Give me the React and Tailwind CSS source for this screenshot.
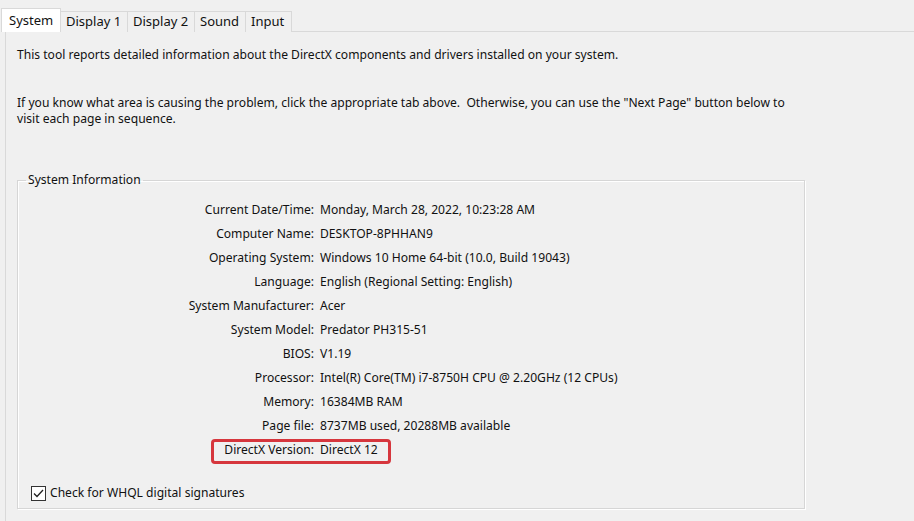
import React from "react";

const rows = [
  ["Current Date/Time:", "Monday, March 28, 2022, 10:23:28 AM"],
  ["Computer Name:", "DESKTOP-8PHHAN9"],
  ["Operating System:", "Windows 10 Home 64-bit (10.0, Build 19043)"],
  ["Language:", "English (Regional Setting: English)"],
  ["System Manufacturer:", "Acer"],
  ["System Model:", "Predator PH315-51"],
  ["BIOS:", "V1.19"],
  ["Processor:", "Intel(R) Core(TM) i7-8750H CPU @ 2.20GHz (12 CPUs)"],
  ["Memory:", "16384MB RAM"],
  ["Page file:", "8737MB used, 20288MB available"],
  ["DirectX Version:", "DirectX 12"],
];

const tabs = [
  { label: "System", w: "w-[60px]" },
  { label: "Display 1", w: "w-[67px]" },
  { label: "Display 2", w: "w-[67px]" },
  { label: "Sound", w: "w-[51px]" },
  { label: "Input", w: "w-[46px]" },
];

const Tab = ({ label, w, active }) => (
  <div
    className={`${w} flex items-center text-[13px] ${
      active
        ? "h-[24px] bg-white border border-b-0 border-[#d9d9d9] pl-[7px] relative z-10"
        : "h-[21px] bg-[#f0f0f0] border border-l-0 border-b-0 border-[#d9d9d9] pl-[5px]"
    }`}
  >
    {label}
  </div>
);

const InfoRow = ({ label, value, highlight }) => (
  <div className="relative grid grid-cols-[295px_1fr] gap-x-[6px] h-[24px] items-center">
    <span className="text-right">{label}</span>
    <span>{value}</span>
    {highlight && (
      <div className="absolute left-[192px] top-[1px] w-[180px] h-[25px] border-[3px] border-[#d6363d] rounded-[4px]" />
    )}
  </div>
);

export default function App() {
  return (
    <div
      className="w-[914px] h-[521px] bg-[#f0f0f0] overflow-hidden text-[12.1px] text-[#111]"
      style={{ fontFamily: '"Noto Sans", "Open Sans", sans-serif' }}
    >
      <div className="flex items-end pl-[1px] pt-[8px]">
        {tabs.map((t, i) => (
          <Tab key={t.label} {...t} active={i === 0} />
        ))}
      </div>
      <div className="ml-[5px] -mt-[1px] border-l border-t border-[#d9d9d9] h-[500px] pl-[11px] pt-[15px]">
        <p className="leading-[16px]">
          This tool reports detailed information about the DirectX components and drivers installed on your system.
        </p>
        <p className="leading-[16px] mt-[32px] w-[780px]">
          If you know what area is causing the problem, click the appropriate tab above.&nbsp; Otherwise, you can use the "Next Page" button below to visit each page in sequence.
        </p>
        <fieldset className="mt-[46px] w-[788px] h-[336px] border border-[#d6d6d6] shadow-[inset_1px_1px_0_#fff,1px_1px_0_#fff] px-[1px]">
          <legend className="ml-[7px] px-[2px] leading-[14px]">System Information</legend>
          <div className="pt-[11px]">
            {rows.map(([l, v], i) => (
              <InfoRow key={l} label={l} value={v} highlight={i === rows.length - 1} />
            ))}
          </div>
          <label className="flex items-center gap-[4px] mt-[22px] ml-[12px]">
            <span className="w-[15px] h-[15px] border border-[#333] bg-white flex items-center justify-center">
              <svg width="11" height="9" viewBox="0 0 11 9" fill="none">
                <path d="M1 4.5 L4 7.5 L10 1" stroke="#222" strokeWidth="1.3" />
              </svg>
            </span>
            <span>Check for WHQL digital signatures</span>
          </label>
        </fieldset>
      </div>
    </div>
  );
}
